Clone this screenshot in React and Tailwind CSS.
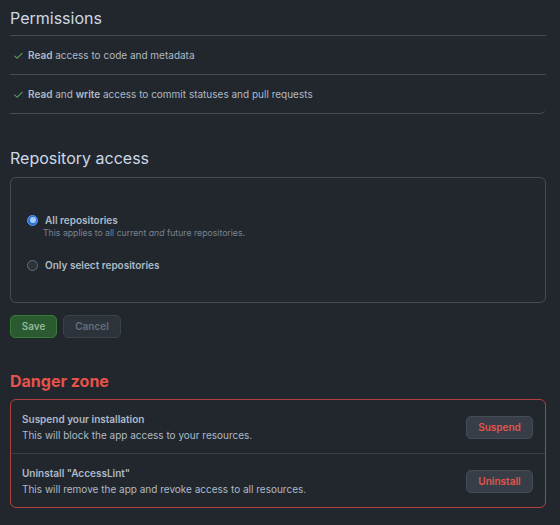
import { useState } from 'react';

const Check = () => (
  <svg width="11" height="11" viewBox="0 0 16 16" fill="#57ab5a" className="shrink-0">
    <path d="M13.78 4.22a.75.75 0 0 1 0 1.06l-7.25 7.25a.75.75 0 0 1-1.06 0L2.22 9.28a.75.75 0 0 1 1.06-1.06L6 10.94l6.72-6.72a.75.75 0 0 1 1.06 0Z" />
  </svg>
);

const Radio = ({ checked }) =>
  checked ? (
    <span className="w-[11px] h-[11px] rounded-full bg-[#316dca] border border-[#539bf5] flex items-center justify-center shrink-0">
      <span className="w-[6px] h-[6px] rounded-full bg-[#a5ccf8]" />
    </span>
  ) : (
    <span className="w-[11px] h-[11px] rounded-full bg-[#2d333b] border border-[#636e7b] shrink-0" />
  );

const App = () => {
  const [access, setAccess] = useState('all');

  return (
    <div className="min-h-[525px] bg-[#22272e] px-[10px] pt-[6px] pr-[14px] font-['Inter',sans-serif] text-[#adbac7]">
      <h2 className="text-[16px] leading-[24px] pb-[5px] border-b border-[#444c56] text-[#cdd9e5]">Permissions</h2>
      <div className="h-[39px] flex items-center gap-[4px] pl-[3px] border-b border-[#444c56] text-[10px]">
        <Check />
        <span><b className="font-semibold">Read</b> access to code and metadata</span>
      </div>
      <div className="h-[39px] flex items-center gap-[4px] pl-[3px] border-b border-[#444c56] rounded-br-[6px] text-[10px]">
        <Check />
        <span><b className="font-semibold">Read</b> and <b className="font-semibold">write</b> access to commit statuses and pull requests</span>
      </div>

      <h2 className="mt-[32px] mb-[7px] text-[16px] leading-[24px] text-[#cdd9e5]">Repository access</h2>
      <div className="border border-[#444c56] rounded-[6px] pl-[16px] pt-[35px] pb-[30px]">
        <label className="flex items-center gap-[7px] cursor-pointer" onClick={() => setAccess('all')}>
          <Radio checked={access === 'all'} />
          <span className="text-[10px] leading-[14px] font-semibold">All repositories</span>
        </label>
        <p className="pl-[16px] text-[8.7px] leading-[12px] text-[#768390]">
          This applies to all current <i>and</i> future repositories.
        </p>
        <label className="mt-[19px] flex items-center gap-[7px] cursor-pointer" onClick={() => setAccess('select')}>
          <Radio checked={access === 'select'} />
          <span className="text-[10px] leading-[14px] font-semibold">Only select repositories</span>
        </label>
      </div>

      <div className="mt-[12px] flex gap-[6px]">
        <button className="h-[23px] w-[47px] rounded-[5px] bg-[#2b5a30] border border-[#347d39] text-[10px] font-semibold text-[#93b898]">Save</button>
        <button className="h-[23px] w-[58px] rounded-[5px] bg-[#2d333b] border border-[#3b424c] text-[10px] font-semibold text-[#636e7b]">Cancel</button>
      </div>

      <h2 className="mt-[31px] mb-[6px] text-[16px] leading-[24px] font-bold text-[#e5534b]">Danger zone</h2>
      <div className="border border-[#b4403b] rounded-[6px]">
        <div className="flex items-center justify-between pl-[11px] pr-[12px] pt-[12px] pb-[11px] border-b border-[#373e47]">
          <div>
            <p className="text-[10px] leading-[14px] font-semibold">Suspend your installation</p>
            <p className="mt-[2px] text-[10px] leading-[14px]">This will block the app access to your resources.</p>
          </div>
          <button className="h-[23px] w-[67px] rounded-[5px] bg-[#373e47] border border-[#444c56] text-[10px] font-semibold text-[#e5534b]">Suspend</button>
        </div>
        <div className="flex items-center justify-between pl-[11px] pr-[12px] pt-[12px] pb-[11px]">
          <div>
            <p className="text-[10px] leading-[14px] font-semibold">Uninstall "AccessLint"</p>
            <p className="mt-[2px] text-[10px] leading-[14px]">This will remove the app and revoke access to all resources.</p>
          </div>
          <button className="h-[23px] w-[67px] rounded-[5px] bg-[#373e47] border border-[#444c56] text-[10px] font-semibold text-[#e5534b]">Uninstall</button>
        </div>
      </div>
    </div>
  );
};

export default App;
